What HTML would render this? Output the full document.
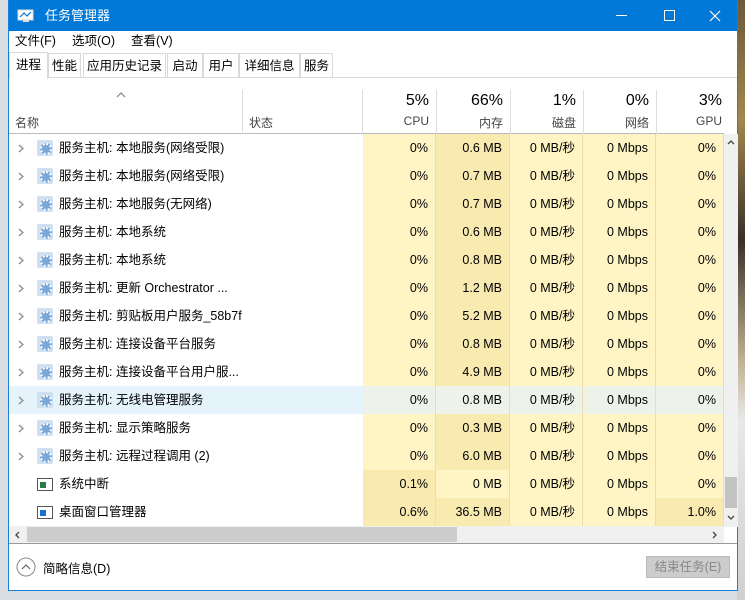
<!DOCTYPE html>
<html><head><meta charset="utf-8"><style>
*{margin:0;padding:0;box-sizing:border-box}
body{width:745px;height:600px;overflow:hidden;background:#d8dde2;font-family:"Liberation Sans","Noto Sans CJK SC",sans-serif;font-size:12px;color:#000;position:relative}
.bgr{position:absolute;left:737px;top:0;width:8px;height:600px;background:linear-gradient(#6b5a3a,#a08850 20%,#3a3028 40%,#c0b090 60%,#e8e8e8 70%,#d0d0d0)}
.win{position:absolute;left:8px;top:0;width:730px;height:591px;background:#fff;border:1px solid #1a7fd8;border-top:none}
.title{height:31px;background:#0078d7;color:#fff;font-size:13px;line-height:31px;padding-left:36px;position:relative}
.menu{height:20px;line-height:20px;font-size:12.5px}
.menu span{margin-left:6px;margin-right:10px}
.tabs{position:absolute;top:52px;left:0;height:26px;width:100%;border-bottom:1px solid #d9d9d9}
.tab{position:absolute;height:25px;line-height:25px;font-size:12.5px;border:1px solid #d9d9d9;background:#fff;top:1px;text-align:center}
.hdr{position:absolute;top:90px;left:0;width:715px;height:44px;border-bottom:1px solid #bbb}
.c{position:absolute;text-align:right}
.rows{position:absolute;top:134px;left:0;width:715px}
.row{position:relative;height:28px;line-height:28px;font-size:12.5px}
.cell{position:absolute;top:0;height:28px;text-align:right;padding-right:7px;border-right:1px solid #ecdcae;background:#fff4c4}
.d{background:#f9ebb0}
.nm{position:absolute;left:50px}
.arr{position:absolute;left:9px;top:10px}
.gear{position:absolute;left:28px;top:6px;width:16px;height:16px;background:#cfe0f0;border-radius:2px}
.gear:after{content:"";position:absolute;left:3px;top:3px;width:8px;height:8px;border:2px dotted #fff;border-radius:50%;background:#7aa8d8}
.sys{position:absolute;left:28px;top:8px;width:16px;height:13px;border:1px solid #555;background:#fff}
.sys i{position:absolute;left:2px;top:3px;width:6px;height:6px;background:#2a7a4a}
.hl .cell{background:#eef3ea}
.hl{background:#e5f3fb}
.hn{font-size:16px;padding-right:7px;top:0;height:44px;padding-top:2px}
.hn div{font-size:12px;color:#444;margin-top:4px}
</style></head><body>
<div class="bgr"></div>
<div class="win">
<div class="title">
<svg style="position:absolute;left:8px;top:9px" width="17" height="14"><rect x="1" y="1" width="15" height="10" fill="#fff" stroke="#ddd"/><polyline points="3,8 7,4 10,7 14,3" fill="none" stroke="#0078d7" stroke-width="1.2"/><rect x="6" y="11" width="6" height="2" fill="#ddd"/></svg>
任务管理器
<span style="position:absolute;left:607px;top:15px;width:11px;height:1px;background:#fff"></span>
<span style="position:absolute;left:655px;top:10px;width:11px;height:11px;border:1px solid #fff"></span>
<svg style="position:absolute;left:700px;top:10px" width="12" height="12"><path d="M1 1L11 11M11 1L1 11" stroke="#fff" stroke-width="1.2"/></svg>
</div>
<div class="menu"><span>文件(F)</span><span>选项(O)</span><span>查看(V)</span></div>
<div class="tabs">
<div class="tab" style="left:0;width:39px;top:0;height:27px;border-bottom:none;line-height:25px">进程</div>
<div class="tab" style="left:39px;width:33px">性能</div>
<div class="tab" style="left:74px;width:83px">应用历史记录</div>
<div class="tab" style="left:158px;width:36px">启动</div>
<div class="tab" style="left:194px;width:36px">用户</div>
<div class="tab" style="left:230px;width:61px">详细信息</div>
<div class="tab" style="left:291px;width:33px">服务</div>
</div>
<div class="hdr">
<svg style="position:absolute;left:107px;top:2px" width="10" height="6"><path d="M1 5L5 1L9 5" fill="none" stroke="#777"/></svg>
<div style="position:absolute;left:6px;top:24px;color:#444">名称</div>
<div style="position:absolute;left:233px;top:0;height:44px;border-left:1px solid #ddd"></div>
<div style="position:absolute;left:240px;top:24px;color:#444">状态</div>
<div style="position:absolute;left:353px;top:0;height:44px;border-left:1px solid #ddd"></div>
<div class="c hn" style="left:353px;width:74px">5%<div>CPU</div></div>
<div class="c hn" style="left:427px;width:74px;border-left:1px solid #ddd">66%<div>内存</div></div>
<div class="c hn" style="left:501px;width:73px;border-left:1px solid #ddd">1%<div>磁盘</div></div>
<div class="c hn" style="left:574px;width:73px;border-left:1px solid #ddd">0%<div>网络</div></div>
<div class="c hn" style="left:647px;width:73px;border-left:1px solid #ddd">3%<div>GPU</div></div>
</div>
<div class="rows" id="rows"></div>
<div style="position:absolute;left:715px;top:134px;width:14px;height:393px;background:#f0f0f0">
<svg style="position:absolute;left:3px;top:6px" width="8" height="5"><path d="M1 4L4 1L7 4" fill="none" stroke="#444" stroke-width="1.3"/></svg>
<div style="position:absolute;left:1px;top:343px;width:12px;height:31px;background:#c2c2c2"></div>
<svg style="position:absolute;left:3px;top:381px" width="8" height="5"><path d="M1 1L4 4L7 1" fill="none" stroke="#444" stroke-width="1.3"/></svg>
</div>
<div style="position:absolute;left:0;top:526px;width:715px;height:17px;background:#f0f0f0">
<svg style="position:absolute;left:6px;top:5px" width="5" height="8"><path d="M4 1L1 4L4 7" fill="none" stroke="#444" stroke-width="1.3"/></svg>
<div style="position:absolute;left:18px;top:1px;width:430px;height:15px;background:#cdcdcd"></div>
<svg style="position:absolute;left:703px;top:5px" width="5" height="8"><path d="M1 1L4 4L1 7" fill="none" stroke="#444" stroke-width="1.3"/></svg>
</div>
<div style="position:absolute;left:0;top:543px;width:728px;border-top:1px solid #999"></div>
<svg style="position:absolute;left:7px;top:557px" width="20" height="20"><circle cx="10" cy="10" r="9" fill="none" stroke="#888"/><path d="M6 12L10 8L14 12" fill="none" stroke="#666" stroke-width="1.2"/></svg>
<div style="position:absolute;left:34px;top:558px;font-size:12.5px">简略信息(D)</div>
<div style="position:absolute;left:637px;top:556px;width:84px;height:22px;background:#ccc;border:1px solid #bbb;color:#888;text-align:center;line-height:20px;font-size:12.5px">结束任务(E)</div>
</div>
<script>
var d=[["g","服务主机: 本地服务(网络受限)","0%","0.6 MB","0 MB/秒","0 Mbps","0%",""],
["g","服务主机: 本地服务(网络受限)","0%","0.7 MB","0 MB/秒","0 Mbps","0%",""],
["g","服务主机: 本地服务(无网络)","0%","0.7 MB","0 MB/秒","0 Mbps","0%",""],
["g","服务主机: 本地系统","0%","0.6 MB","0 MB/秒","0 Mbps","0%",""],
["g","服务主机: 本地系统","0%","0.8 MB","0 MB/秒","0 Mbps","0%",""],
["g","服务主机: 更新 Orchestrator ...","0%","1.2 MB","0 MB/秒","0 Mbps","0%",""],
["g","服务主机: 剪贴板用户服务_58b7f","0%","5.2 MB","0 MB/秒","0 Mbps","0%",""],
["g","服务主机: 连接设备平台服务","0%","0.8 MB","0 MB/秒","0 Mbps","0%",""],
["g","服务主机: 连接设备平台用户服...","0%","4.9 MB","0 MB/秒","0 Mbps","0%",""],
["g","服务主机: 无线电管理服务","0%","0.8 MB","0 MB/秒","0 Mbps","0%","hl"],
["g","服务主机: 显示策略服务","0%","0.3 MB","0 MB/秒","0 Mbps","0%",""],
["g","服务主机: 远程过程调用 (2)","0%","6.0 MB","0 MB/秒","0 Mbps","0%",""],
["s","系统中断","0.1%","0 MB","0 MB/秒","0 Mbps","0%","a"],
["s","桌面窗口管理器","0.6%","36.5 MB","0 MB/秒","0 Mbps","1.0%","b"]];
var L=[354,427,501,574,647],W=[73,74,73,73,68],h="";
d.forEach(function(r){
h+='<div class="row '+(r[7]=="hl"?"hl":"")+'">';
if(r[0]=="g")h+='<svg class="arr" width="6" height="9"><path d="M1 1L5 4.5L1 8" fill="none" stroke="#888" stroke-width="1.2"/></svg><span class="gear"></span>';else h+='<span class="sys"><i'+(r[7]=="b"?' style="background:#1a6fd0"':'')+'></i></span>';
h+='<span class="nm">'+r[1]+'</span>';
for(var i=0;i<5;i++){var dk=(i==1&&r[3]!="0 MB")||(i==0&&(r[7]=="a"||r[7]=="b"))||(i==4&&r[7]=="b");
h+='<div class="cell'+(dk?' d':'')+'" style="left:'+L[i]+'px;width:'+W[i]+'px">'+r[2+i]+'</div>';}
h+='</div>';});
document.getElementById("rows").innerHTML=h;
</script>
</body></html>
